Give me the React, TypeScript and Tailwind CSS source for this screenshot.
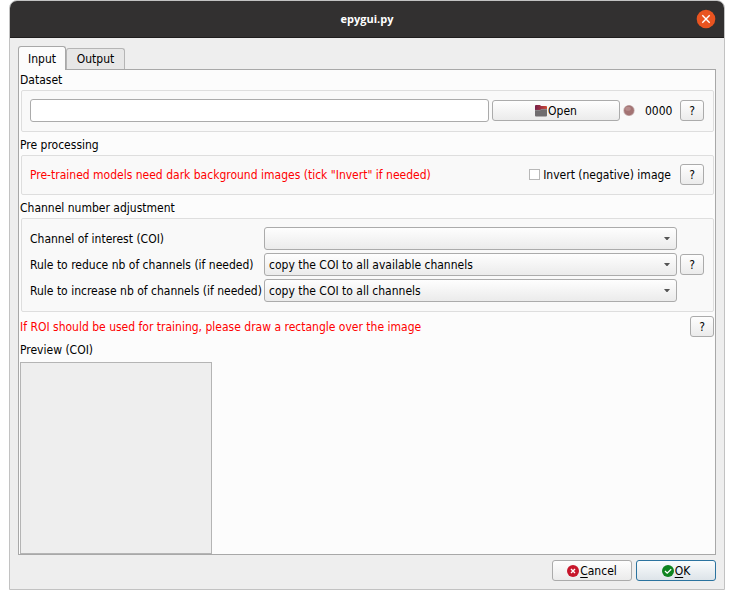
import { useState } from "react";
import type { ReactNode } from "react";

const raised =
  "rounded-[3px] border border-[#ababab] bg-linear-to-b from-[#fefefe] to-[#ebebeb]";

function HelpButton({ label }: { label: string }) {
  return (
    <button type="button" aria-label={label} className={`${raised} flex h-[21px] w-6 shrink-0 items-center justify-center`}>
      ?
    </button>
  );
}

function Group({ title, children }: { title: string; children: ReactNode }) {
  return (
    <section>
      <h2 className="flex h-[23px] items-center pt-0.5">{title}</h2>
      <div className="ml-px rounded-xs border border-[#dedede] bg-[#f9f9f9] pt-2 pr-[9px] pb-[9px] pl-2">{children}</div>
    </section>
  );
}

function Combo({ id, options }: { id: string; options: string[] }) {
  return (
    <div className="relative">
      <select id={id} className={`${raised} block h-[23px] w-full appearance-none px-1`}>
        {options.map((o) => (
          <option key={o}>{o}</option>
        ))}
      </select>
      <svg viewBox="0 0 6 3" className="pointer-events-none absolute top-[10px] right-[7px] h-[3px] w-[6px]">
        <path d="M0 0h6L3.5 3h-1z" fill="#555" />
      </svg>
    </div>
  );
}

export default function App() {
  const [tab, setTab] = useState("Input");
  return (
    <div className="min-h-screen bg-white px-[9px] pb-[9px] font-['DejaVu_Sans_Condensed','Open_Sans',sans-serif] text-[12px] leading-4 text-black">
      <main className="overflow-hidden rounded-t-lg border border-[#c2c2c2] bg-[#eeeeee]">
        <header className="flex h-[37px] items-center border-b border-[#1f1d1d] bg-[#323030] px-2">
          <span className="w-5" />
          <h1 className="flex-1 text-center font-['Open_Sans',sans-serif] text-[11px] font-bold text-white">epygui.py</h1>
          <button type="button" aria-label="Close" className="flex h-5 w-5 items-center justify-center">
            <svg viewBox="0 0 20 20" className="h-5 w-5">
              <circle cx="10" cy="10" r="9.3" fill="#e95420" />
              <path d="M6.3 6.3l7.4 7.4M13.7 6.3l-7.4 7.4" stroke="#fff" strokeWidth="1.4" />
            </svg>
          </button>
        </header>

        <div className="px-2 pt-2 pb-2">
          <div role="tablist" className="flex items-end">
            <button
              type="button"
              role="tab"
              aria-selected={tab === "Input"}
              onClick={() => setTab("Input")}
              className="z-10 -mb-px h-6 w-12 rounded-t-[3px] border border-b-0 border-[#a8a8a8] bg-[#fcfcfc]"
            >
              Input
            </button>
            <button
              type="button"
              role="tab"
              aria-selected={tab === "Output"}
              onClick={() => setTab("Output")}
              className="h-[21px] w-[59px] rounded-t-[3px] border border-b-0 border-[#b5b5b5] bg-[#e7e7e7]"
            >
              Output
            </button>
          </div>

          <div role="tabpanel" className="border border-[#a8a8a8] bg-[#fcfcfc] px-px">
            <div className="-mt-[3px]">
              <Group title="Dataset">
                <div className="flex h-[23px] items-center gap-[3px]">
                  <input aria-label="Dataset path" className="h-[23px] min-w-0 flex-1 rounded-[3px] border border-[#ababab] bg-white px-1" />
                  <button type="button" className={`${raised} flex h-[21px] w-32 items-center justify-center gap-px`}>
                    <svg viewBox="0 0 12 12" className="h-3 w-3">
                      <defs>
                        <linearGradient id="folder">
                          <stop offset="0" stopColor="#74204a" />
                          <stop offset="0.5" stopColor="#a03040" />
                          <stop offset="1" stopColor="#cf4a33" />
                        </linearGradient>
                      </defs>
                      <path d="M0 1Q0 0 1 0h4l1 1h5q1 0 1 1v5H0z" fill="url(#folder)" />
                      <path d="M0 5h5l1-1h6v6.500q0 1-1 1H1q-1 0-1-1z" fill="#706d6f" />
                      <path d="M0 5.400h5.200l1-1H12" fill="none" stroke="#969293" strokeWidth=".7" />
                    </svg>
                    Open
                  </button>
                  <svg viewBox="0 0 12 12" className="h-3 w-3">
                    <ellipse cx="6" cy="5.500" rx="5.700" ry="5.500" fill="#cdbaba" />
                    <ellipse cx="6" cy="5.500" rx="4.900" ry="5" fill="#a37373" />
                    <ellipse cx="5" cy="3.800" rx="2.800" ry="2" fill="#b78c8c" />
                  </svg>
                  <output className="w-[39px] pl-[7px]">0000</output>
                  <HelpButton label="Help on dataset" />
                </div>
              </Group>
            </div>

            <Group title="Pre processing">
              <div className="flex h-[21px] items-center gap-[9px]">
                <p className="flex-1 whitespace-nowrap text-[#ff0000]">
                  Pre-trained models need dark background images (tick "Invert" if needed)
                </p>
                <label className="flex items-center gap-[3px] whitespace-nowrap">
                  <input type="checkbox" className="h-[11px] w-[11px] appearance-none border border-[#b8b8b8] bg-white checked:bg-[#308cc6]" />
                  Invert (negative) image
                </label>
                <HelpButton label="Help on pre processing" />
              </div>
            </Group>

            <Group title="Channel number adjustment">
              <div className="grid grid-cols-[231px_minmax(0,1fr)_24px] items-center gap-[3px] whitespace-nowrap">
                <label htmlFor="coi">Channel of interest (COI)</label>
                <Combo id="coi" options={[""]} />
                <span />
                <label htmlFor="reduce">Rule to reduce nb of channels (if needed)</label>
                <Combo id="reduce" options={["copy the COI to all available channels"]} />
                <HelpButton label="Help on channel adjustment" />
                <label htmlFor="increase">Rule to increase nb of channels (if needed)</label>
                <Combo id="increase" options={["copy the COI to all channels"]} />
              </div>
            </Group>

            <div className="flex items-center justify-between pt-1">
              <p className="text-[#ff0000]">
                If ROI should be used for training, please draw a rectangle over the image
              </p>
              <HelpButton label="Help on ROI" />
            </div>
            <h2 className="flex h-[25px] items-center">Preview (COI)</h2>
            <div className="h-48 w-48 border border-[#b4b4b4] bg-[#eeeeee]" />
          </div>

          <footer className="flex justify-end gap-1 pt-[5px]">
            <button type="button" className={`${raised} flex h-[21px] w-20 items-center justify-center gap-px`}>
              <svg viewBox="0 0 12 12" className="h-3 w-3">
                <circle cx="6" cy="6" r="6" fill="#c7162b" />
                <path d="M4 4l4 4M8 4L4 8" stroke="#fff" strokeWidth="1.400" />
              </svg>
              <span>
                <span className="underline underline-offset-2">C</span>ancel
              </span>
            </button>
            <button
              type="button"
              className="flex h-[21px] w-20 items-center justify-center gap-px rounded-[3px] border border-[#2b739f] bg-linear-to-b from-[#fafcfd] to-[#dde4e9]"
            >
              <svg viewBox="0 0 12 12" className="h-3 w-3">
                <circle cx="6" cy="6" r="6" fill="#0e8420" />
                <path d="M3 6l2.200 2.200L9.200 4.200" fill="none" stroke="#fff" strokeWidth="1.300" />
              </svg>
              <span>
                <span className="underline underline-offset-2">O</span>K
              </span>
            </button>
          </footer>
        </div>
      </main>
    </div>
  );
}
